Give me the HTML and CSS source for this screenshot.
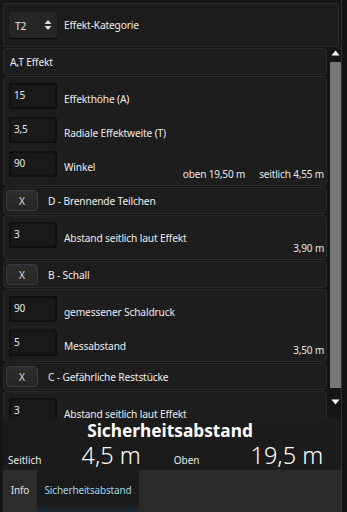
FILE: index.html
```html
<!DOCTYPE html>
<html>
<head>
<meta charset="utf-8">
<link rel="stylesheet" href="styles.css">
</head>
<body>
<div class="app">
  <div class="top">
    <div class="spinner"><span>T2</span>
      <svg class="updown" width="8" height="12" viewBox="0 0 8 12"><path d="M4 1 L7.5 5 H0.5 Z M4 11 L7.5 7 H0.5 Z" fill="#ddd"/></svg>
    </div>
    <span class="lbl">Effekt-Kategorie</span>
  </div>
  <div class="listwrap">
    <div class="items">
      <div class="card head"><span class="htext">A,T Effekt</span></div>
      <div class="card body b1">
        <div class="row"><div class="inp">15</div><span class="lbl">Effekthöhe (A)</span></div>
        <div class="row"><div class="inp">3,5</div><span class="lbl">Radiale Effektweite (T)</span></div>
        <div class="row"><div class="inp">90</div><span class="lbl">Winkel</span></div>
        <div class="res two"><span>oben 19,50 m</span><span>seitlich 4,55 m</span></div>
      </div>
      <div class="card head"><div class="xbtn">X</div><span class="htext">D - Brennende Teilchen</span></div>
      <div class="card body b2">
        <div class="row"><div class="inp">3</div><span class="lbl">Abstand seitlich laut Effekt</span></div>
        <div class="res"><span>3,90 m</span></div>
      </div>
      <div class="card head"><div class="xbtn">X</div><span class="htext">B - Schall</span></div>
      <div class="card body b3">
        <div class="row"><div class="inp">90</div><span class="lbl">gemessener Schaldruck</span></div>
        <div class="row"><div class="inp">5</div><span class="lbl">Messabstand</span></div>
        <div class="res"><span>3,50 m</span></div>
      </div>
      <div class="card head"><div class="xbtn">X</div><span class="htext">C - Gefährliche Reststücke</span></div>
      <div class="card body b4">
        <div class="row"><div class="inp">3</div><span class="lbl">Abstand seitlich laut Effekt</span></div>
      </div>
    </div>
    <div class="scrollbar">
      <svg width="11" height="8" viewBox="0 0 11 8"><path d="M5.5 1.5 L9.5 6.5 H1.5 Z" fill="#fff"/></svg>
      <div class="track"><div class="thumb"></div></div>
      <svg width="11" height="8" viewBox="0 0 11 8"><path d="M5.5 6.5 L9.5 1.5 H1.5 Z" fill="#fff"/></svg>
    </div>
  </div>
  <div class="result">
    <div class="rtitle">Sicherheitsabstand</div>
    <div class="rrow">
      <span class="rl">Seitlich</span><span class="rv v1">4,5 m</span>
      <span class="rl r2">Oben</span><span class="rv v2">19,5 m</span>
    </div>
  </div>
  <div class="tabs">
    <div class="tab info">Info</div>
    <div class="tab active">Sicherheitsabstand</div>
    <div class="tabrest"></div>
  </div>
</div>
</body>
</html>
```
FILE: styles.css
```css
html, body {
  margin: 0;
  padding: 0;
}
body {
  width: 347px;
  height: 512px;
  overflow: hidden;
  background: #121212;
  font-family: "Noto Sans", "Open Sans", sans-serif;
  color: #e8e8e8;
  font-size: 10.2px;
  letter-spacing: -0.15px;
}
.app {
  width: 341px;
  height: 512px;
  border-right: 1px solid #303030;
  background: #151515;
  display: flex;
  flex-direction: column;
  overflow: hidden;
}
.top {
  margin: 3px 0 0 3px;
  width: 336px;
  border: 1px solid #2a2a2a;
  border-radius: 2px;
  background: #1c1c1c;
  display: flex;
  align-items: center;
  box-sizing: border-box;
  height: 44px;
  padding-left: 5px;
  flex-shrink: 0;
}
.spinner {
  width: 48px;
  height: 26px;
  background: #262626;
  border-radius: 3px;
  box-shadow: 0 1px 1px #0c0c0c;
  display: flex;
  align-items: center;
  justify-content: space-between;
  padding: 0 5px 0 6px;
  box-sizing: border-box;
  margin-right: 7px;
}
.spinner span { padding-top: 2px; }
.lbl { color: #ececec; }
.listwrap {
  display: flex;
  height: 371px;
  flex-shrink: 0;
  overflow: hidden;
}
.items {
  width: 326px;
  padding-left: 3px;
  padding-top: 1px;
  display: flex;
  flex-direction: column;
  gap: 1px;
}
.card {
  background: #1d1d1d;
  border: 1px solid #2a2a2a;
  border-radius: 4px;
  box-sizing: border-box;
  flex-shrink: 0;
}
.head {
  height: 27px;
  display: flex;
  align-items: center;
  padding-left: 2px;
}
.head .htext { margin-left: 4px; color: #eee; }
.xbtn {
  width: 32px;
  height: 21px;
  border-radius: 4px;
  background: linear-gradient(#2e2e2e, #262626);
  border: 1px solid #3a3a3a;
  box-sizing: border-box;
  display: flex;
  align-items: center;
  justify-content: center;
  margin-right: 6px;
  color: #ddd;
}
.body {
  position: relative;
  padding: 6px 0 0 5px;
}
.row {
  display: flex;
  align-items: center;
  height: 26px;
  margin-bottom: 8px;
}
.inp {
  width: 48px;
  height: 26px;
  box-sizing: border-box;
  background: #191919;
  border: 1px solid #0e0e0e;
  border-radius: 2px;
  box-shadow: inset 0 0 2px #000;
  padding: 4px 0 0 4px;
  margin-right: 7px;
  font-size: 10px;
}
.inp + .lbl { margin-top: 5px; }
.res {
  position: absolute;
  right: 2px;
  bottom: 4px;
  display: flex;
  gap: 14px;
  font-size: 10px;
}
.b1 { height: 110px; }
.b2 { height: 45px; }
.b3 { height: 73px; }
.b4 { height: 60px; }
.scrollbar {
  width: 12px;
  margin-left: 2px;
  display: flex;
  flex-direction: column;
  align-items: center;
  padding-top: 2px;
}
.track {
  flex: none;
  width: 11px;
  height: 341px;
  padding-top: 5px;
  box-sizing: border-box;
}
.thumb {
  width: 11px;
  height: 326px;
  background: #777;
  border-radius: 1px;
}
.result {
  height: 52px;
  background: #1b1b1b;
  margin-left: 3px;
  width: 338px;
  flex-shrink: 0;
  position: relative;
  letter-spacing: 0;
}
.rtitle {
  text-align: center;
  font-weight: bold;
  font-size: 17.3px;
  color: #fff;
  padding-top: 2px;
  padding-right: 4px;
  line-height: 22px;
}
.rrow {
  display: flex;
  align-items: baseline;
  padding-left: 5px;
  line-height: 26px;
}
.rl { font-size: 10px; }
.rv { font-size: 23.5px; font-weight: 300; color: #fff; }
.v1 { margin-left: 40px; }
.r2 { margin-left: 33px; }
.v2 { margin-left: 51px; }
.tabs {
  flex: 1;
  display: flex;
  margin-left: 3px;
  width: 338px;
}
.tab {
  display: flex;
  align-items: center;
  font-size: 10px;
  padding-bottom: 2px;
}
.info {
  width: 34px;
  background: #2c2c2c;
  justify-content: center;
  color: #e0e0e0;
}
.active {
  width: 102px;
  background: linear-gradient(#1a1a1a 80%, #1d2a33);
  color: #9fd4ea;
  justify-content: center;
}
.tabrest {
  flex: 1;
  background: #2a2a2a;
}
```
